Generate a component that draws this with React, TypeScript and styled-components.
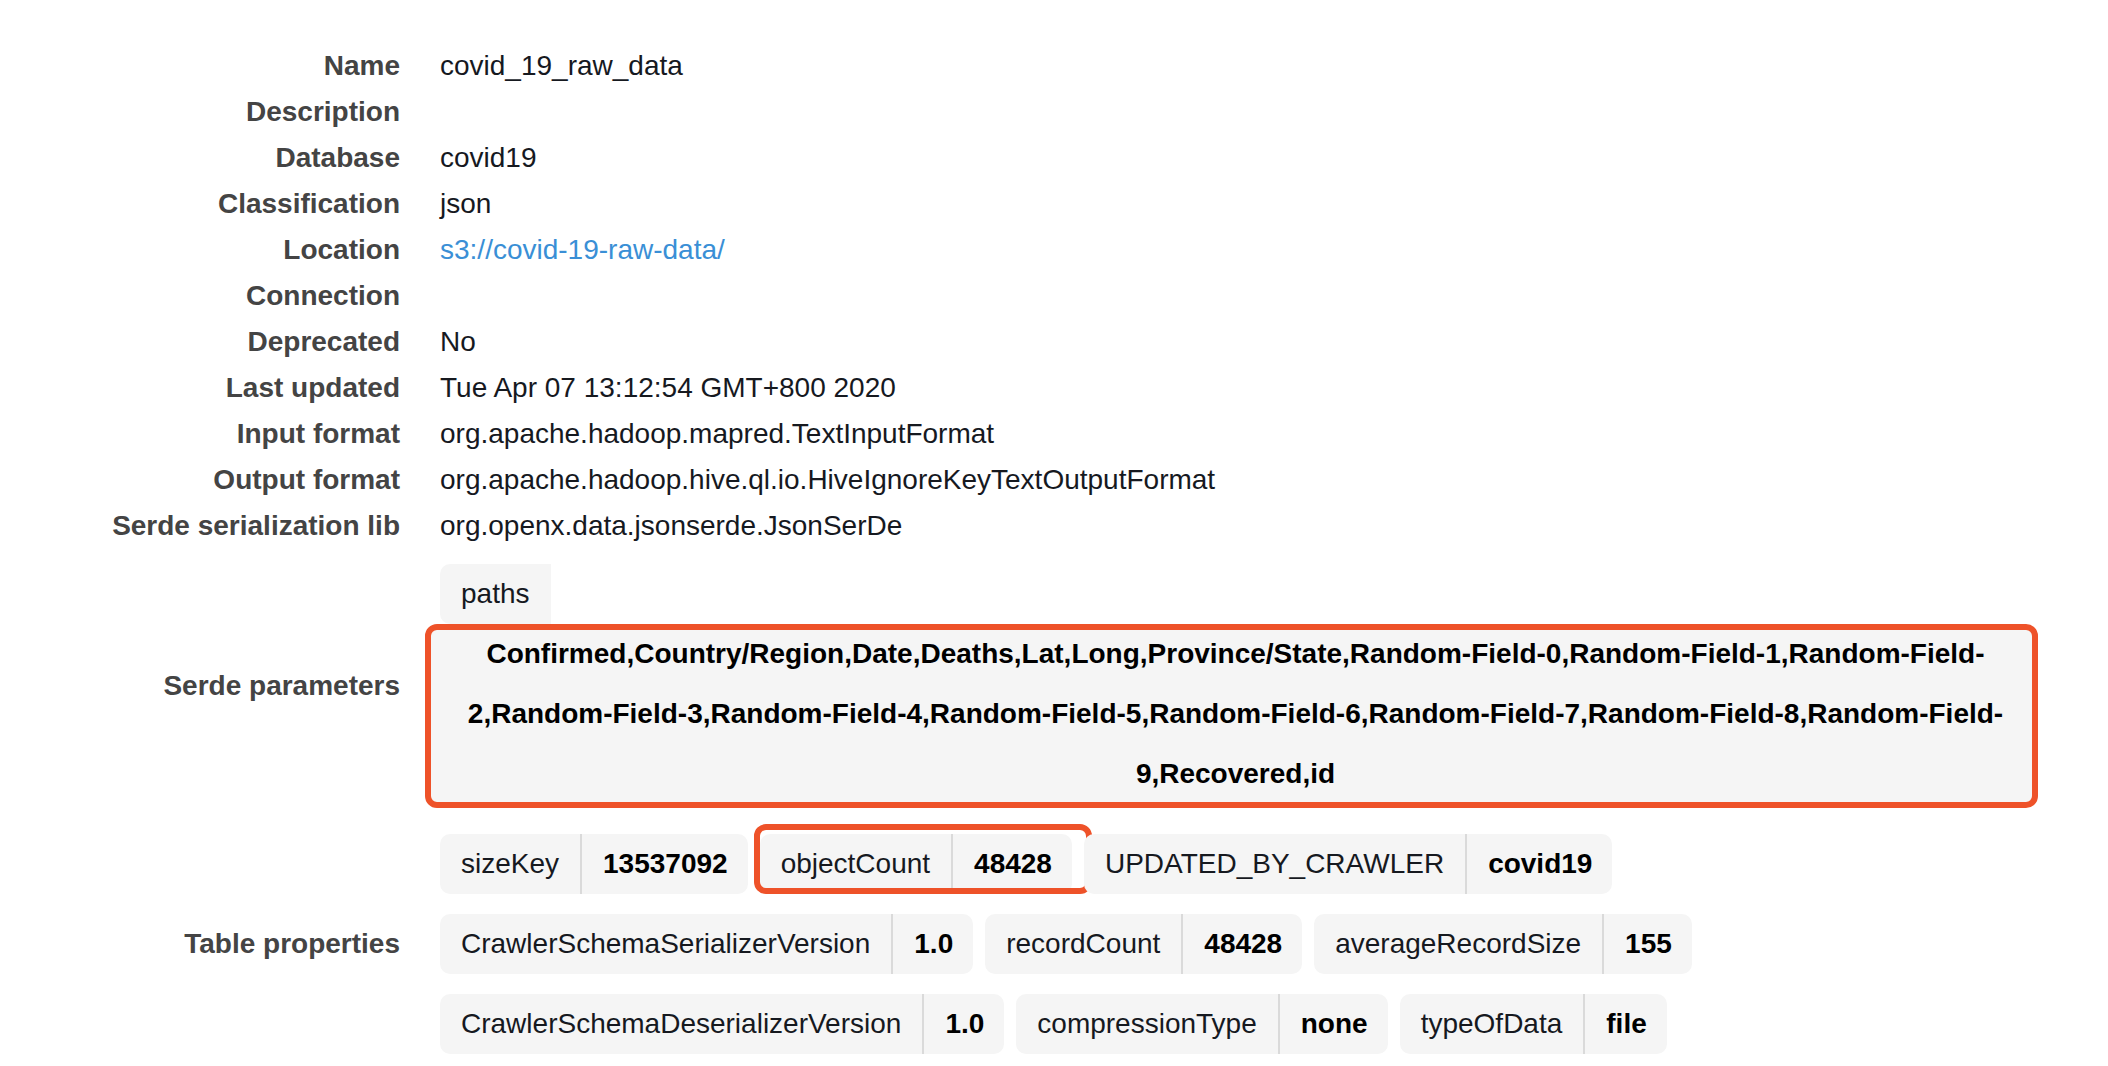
import React from "react";
import styled, { createGlobalStyle } from "styled-components";

const GlobalStyle = createGlobalStyle`
  html, body {
    margin: 0;
    padding: 0;
    background: #ffffff;
  }
  body {
    font-family: "Liberation Sans", Arial, Helvetica, sans-serif;
    -webkit-font-smoothing: antialiased;
  }
`;

const Page = styled.div`
  width: 2108px;
  box-sizing: border-box;
  padding: 43px 85px 0 0;
`;

const Row = styled.div<{ $top?: number }>`
  display: grid;
  grid-template-columns: 400px 1fr;
  column-gap: 40px;
  align-items: center;
  margin-top: ${(p) => p.$top ?? 0}px;
`;

const Label = styled.div`
  text-align: right;
  font-weight: 700;
  font-size: 28px;
  line-height: 46px;
  color: #444444;
  white-space: nowrap;
`;

const Value = styled.div`
  font-size: 28px;
  line-height: 46px;
  color: #16191f;
  min-width: 0;
  white-space: nowrap;
`;

const Link = styled.a`
  color: #3a8fd6;
  text-decoration: none;
`;

const SerdeCell = styled.div`
  display: flex;
  flex-direction: column;
  align-items: flex-start;
`;

const KeyTab = styled.div`
  height: 60px;
  padding: 0 21px;
  background: #f5f5f5;
  border-radius: 10px 0 0 10px;
  font-size: 28px;
  line-height: 60px;
  color: #16191f;
`;

const HighlightedBlock = styled.div`
  align-self: stretch;
  margin: 0 -15px;
  border: 6px solid #ee5229;
  border-radius: 12px;
  background: #f5f5f5;
  padding: 0 12px 0 20px;
  font-weight: 700;
  font-size: 28px;
  color: #000000;
  text-align: center;
`;

const TextLines = styled.div`
  margin: -6px 0 -2px;
  line-height: 60px;
  white-space: nowrap;
`;

const Line = styled.span`
  display: block;
`;

const TagList = styled.div`
  display: flex;
  flex-wrap: wrap;
  column-gap: 12px;
  row-gap: 20px;
`;

const Tag = styled.div<{ $marked?: boolean }>`
  position: relative;
  display: inline-flex;
  height: 60px;
  background: #f5f5f5;
  border-radius: 10px;
  font-size: 28px;
  line-height: 60px;
  white-space: nowrap;

  ${(p) =>
    p.$marked &&
    `
    &::after {
      content: "";
      position: absolute;
      top: -10px;
      right: -20px;
      bottom: 0;
      left: -6px;
      border: 6px solid #ee5229;
      border-radius: 12px;
      pointer-events: none;
    }
  `}
`;

const TagKey = styled.span`
  padding: 0 21px;
  color: #16191f;
`;

const TagValue = styled.span`
  padding: 0 20px 0 21px;
  border-left: 2px solid #dadada;
  font-weight: 700;
  color: #000000;
`;

const details: { label: string; value: React.ReactNode }[] = [
  { label: "Name", value: "covid_19_raw_data" },
  { label: "Description", value: "" },
  { label: "Database", value: "covid19" },
  { label: "Classification", value: "json" },
  { label: "Location", value: <Link href="#">s3://covid-19-raw-data/</Link> },
  { label: "Connection", value: "" },
  { label: "Deprecated", value: "No" },
  { label: "Last updated", value: "Tue Apr 07 13:12:54 GMT+800 2020" },
  { label: "Input format", value: "org.apache.hadoop.mapred.TextInputFormat" },
  { label: "Output format", value: "org.apache.hadoop.hive.ql.io.HiveIgnoreKeyTextOutputFormat" },
  { label: "Serde serialization lib", value: "org.openx.data.jsonserde.JsonSerDe" },
];

const pathLines = [
  "Confirmed,Country/Region,Date,Deaths,Lat,Long,Province/State,Random-Field-0,Random-Field-1,Random-Field-",
  "2,Random-Field-3,Random-Field-4,Random-Field-5,Random-Field-6,Random-Field-7,Random-Field-8,Random-Field-",
  "9,Recovered,id",
];

const properties: { k: string; v: string; marked?: boolean }[] = [
  { k: "sizeKey", v: "13537092" },
  { k: "objectCount", v: "48428", marked: true },
  { k: "UPDATED_BY_CRAWLER", v: "covid19" },
  { k: "CrawlerSchemaSerializerVersion", v: "1.0" },
  { k: "recordCount", v: "48428" },
  { k: "averageRecordSize", v: "155" },
  { k: "CrawlerSchemaDeserializerVersion", v: "1.0" },
  { k: "compressionType", v: "none" },
  { k: "typeOfData", v: "file" },
];

export default function App() {
  return (
    <>
      <GlobalStyle />
      <Page>
        {details.map((d) => (
          <Row key={d.label}>
            <Label>{d.label}</Label>
            <Value>{d.value}</Value>
          </Row>
        ))}

        <Row $top={15}>
          <Label>Serde parameters</Label>
          <SerdeCell>
            <KeyTab>paths</KeyTab>
            <HighlightedBlock>
              <TextLines>
                {pathLines.map((l) => (
                  <Line key={l}>{l}</Line>
                ))}
              </TextLines>
            </HighlightedBlock>
          </SerdeCell>
        </Row>

        <Row $top={26}>
          <Label>Table properties</Label>
          <TagList>
            {properties.map((p) => (
              <Tag key={p.k} $marked={p.marked}>
                <TagKey>{p.k}</TagKey>
                <TagValue>{p.v}</TagValue>
              </Tag>
            ))}
          </TagList>
        </Row>
      </Page>
    </>
  );
}
